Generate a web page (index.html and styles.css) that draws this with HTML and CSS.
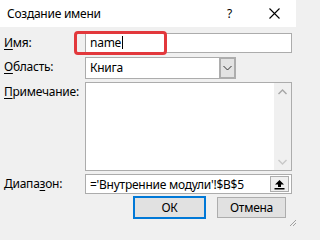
FILE: index.html
```
<!DOCTYPE html>
<html>
<head>
<meta charset="utf-8">
<link rel="stylesheet" href="styles.css">
</head>
<body>
<div class="dialog">
  <div class="titlebar">
    <span class="title">Создание имени</span>
    <span class="help">?</span>
    <span class="close"><svg width="11" height="11" viewBox="0 0 11 11"><path d="M0.5 0.5 L10.5 10.5 M10.5 0.5 L0.5 10.5" stroke="#000" stroke-width="1.1" fill="none"/></svg></span>
  </div>
  <div class="body">
    <div class="row r-name">
      <label class="lbl"><u>И</u>мя:</label>
      <div class="field input">name<span class="caret"></span></div>
      <div class="highlight"></div>
    </div>
    <div class="row r-scope">
      <label class="lbl"><u>О</u>бласть:</label>
      <div class="combo">
        <div class="field combo-text">Книга</div>
        <div class="combo-btn"><svg width="9" height="6" viewBox="0 0 9 6"><path d="M0.5 1 L4.5 5 L8.5 1" stroke="#333" stroke-width="1" fill="none"/></svg></div>
      </div>
    </div>
    <div class="row r-note">
      <label class="lbl"><u>П</u>римечание:</label>
      <div class="field textarea">
        <div class="scroll">
          <svg width="9" height="6" viewBox="0 0 9 6"><path d="M0.5 5 L4.5 1 L8.5 5" stroke="#a6a6a6" stroke-width="1.4" fill="none"/></svg>
          <svg width="9" height="6" viewBox="0 0 9 6"><path d="M0.5 1 L4.5 5 L8.5 1" stroke="#c8c8c8" stroke-width="1.4" fill="none"/></svg>
        </div>
      </div>
    </div>
    <div class="row r-range">
      <label class="lbl">Диапа<u>з</u>он:</label>
      <div class="field range">
        <span class="range-text">='Внутренние модули'!$B$5</span>
        <span class="collapse"><svg width="11" height="11" viewBox="0 0 11 11"><path d="M5.5 1 L10 5.5 L7 5.5 L7 8 L4 8 L4 5.5 L1 5.5 Z" fill="#000"/><rect x="0.5" y="9" width="10" height="1.5" fill="#000"/></svg></span>
      </div>
    </div>
    <div class="buttons">
      <button class="btn ok">ОК</button>
      <button class="btn cancel">Отмена</button>
    </div>
    <div class="grip"><svg width="6" height="6" viewBox="0 0 6 6"><path d="M6 0 L0 6 M6 3 L3 6" stroke="#a0a0a0" stroke-width="1"/></svg></div>
  </div>
</div>
</body>
</html>
```
FILE: styles.css
```
* { box-sizing: border-box; }
html, body { margin: 0; padding: 0; }
body {
  width: 296px;
  height: 226px;
  overflow: hidden;
  font-family: "Noto Sans", "Open Sans", sans-serif;
  font-size: 12px;
  letter-spacing: -0.25px;
  color: #000;
  background: #f0f0f0;
}
.dialog { width: 296px; height: 226px; display: flex; flex-direction: column; }
.titlebar {
  height: 27px;
  background: #fff;
  display: flex;
  align-items: center;
  padding-left: 7px;
  flex: none;
}
.title { font-size: 12px; flex: 1; }
.help { width: 10px; margin-right: 32px; font-size: 12px; }
.close { width: 11px; margin-right: 16px; display: flex; }
.body {
  flex: 1;
  position: relative;
  padding: 6px 4px 0 4px;
  background: #f0f0f0;
}
.row { display: flex; position: relative; }
.lbl { width: 81px; flex: none; line-height: 18px; padding-top: 1px; }
.lbl u { text-decoration-thickness: 1px; text-underline-offset: 2px; }
.field {
  background: #fff;
  border: 1px solid #acacac;
  flex: 1;
}
.input { height: 20px; padding-left: 4px; line-height: 18px; }
.caret { display: inline-block; width: 1px; height: 13px; background: #000; vertical-align: -2px; margin-left: 1px; }
.highlight {
  position: absolute;
  left: 70px;
  top: -2px;
  width: 93px;
  height: 24px;
  border: 3px solid #e2383c;
  border-radius: 4px;
}
.r-scope { margin-top: 4px; }
.combo { display: flex; width: 151px; height: 22px; }
.combo-text { height: 22px; padding-left: 4px; line-height: 20px; border-right: none; }
.combo-btn {
  width: 17px;
  height: 22px;
  background: #e3e3e3;
  border: 2px solid #adadad;
  display: flex;
  align-items: center;
  justify-content: center;
}
.r-note { margin-top: 3px; }
.textarea { height: 89px; display: flex; justify-content: flex-end; border-color: #acacac; }
.scroll {
  width: 17px;
  background: #f0f0f0;
  display: flex;
  flex-direction: column;
  justify-content: space-between;
  align-items: center;
  padding: 6px 0 5px;
}
.r-range { margin-top: 3px; }
.range { height: 20px; display: flex; align-items: center; padding-left: 4px; justify-content: space-between; }
.collapse {
  width: 19px;
  height: 16px;
  margin-right: 2px;
  border: 1px solid #adadad;
  background: #f0f0f0;
  display: flex;
  align-items: center;
  justify-content: center;
}
.buttons { display: flex; justify-content: flex-end; align-items: flex-start; margin-top: 2px; padding-right: 6px; }
.btn {
  font-family: inherit;
  font-size: 12px;
  letter-spacing: -0.25px;
  background: #e1e1e1;
  color: #000;
  padding: 0;
  height: 23px;
}
.ok { width: 73px; border: 2px solid #0078d7; margin-right: 11px; }
.cancel { width: 69px; height: 21px; border: 1px solid #adadad; margin-top: 1px; }
.grip { position: absolute; right: 0; bottom: 0; width: 6px; height: 6px; display: flex; }
```
